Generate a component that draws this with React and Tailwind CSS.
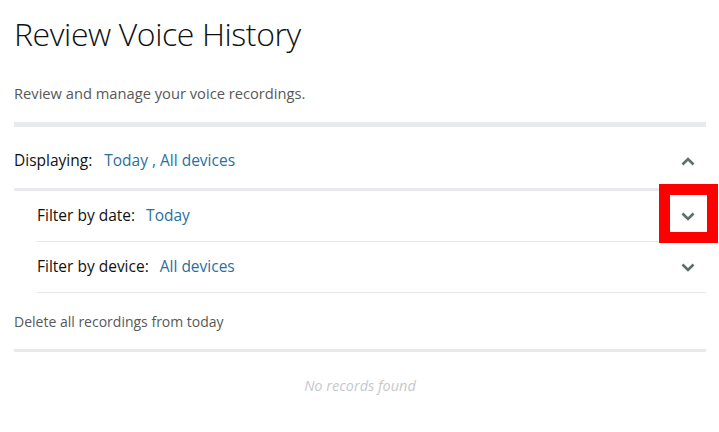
import React from 'react';

const font = { fontFamily: '"Open Sans", "Liberation Sans", sans-serif' };

const Chevron = ({ up }) => (
  <svg width="14" height="9" viewBox="0 0 14 9" className="text-[#5f6b6d]">
    <path
      d={up ? 'M1.5 7.5 L7 2 L12.5 7.5' : 'M1.5 1.5 L7 7 L12.5 1.5'}
      fill="none"
      stroke="currentColor"
      strokeWidth="2.6"
    />
  </svg>
);

const FilterRow = ({ label, value, highlighted }) => (
  <div className="relative flex h-[51px] items-center justify-between border-b border-[#e7e7e7] pr-[11px]">
    <div className="flex items-center gap-[11px] text-[15.5px]">
      <span className="text-[#111]">{label}</span>
      <span className="text-[#2a6f9e]">{value}</span>
    </div>
    <Chevron />
    {highlighted && (
      <div className="absolute right-[-12px] top-[-7px] h-[59px] w-[59px] border-[11px] border-[#ff0000]" />
    )}
  </div>
);

export default function App() {
  return (
    <div className="min-h-screen bg-white px-[14px]" style={font}>
      <h1 className="pt-[14px] text-[32px] font-light leading-[40px] tracking-[-0.4px] text-[#0f1111]">
        Review Voice History
      </h1>
      <p className="mt-[29px] text-[14.7px] leading-[20px] text-[#565959]">
        Review and manage your voice recordings.
      </p>

      <div className="mt-[19px] w-[692px]">
        <div className="h-[5px] bg-[#e7e9ec]" />

        {/* summary row */}
        <div className="flex h-[61px] items-center justify-between pr-[11px] pt-[7px]">
          <div className="flex items-center gap-[12px] text-[15.5px]">
            <span className="text-[#111]">Displaying:</span>
            <span className="text-[#2a6f9e]">Today , All devices</span>
          </div>
          <Chevron up />
        </div>
        <div className="h-[3px] bg-[#e7e9ec]" />

        <div className="pl-[23px]">
          <FilterRow label="Filter by date:" value="Today" highlighted />
          <FilterRow label="Filter by device:" value="All devices" />
        </div>

        <div className="flex h-[56px] items-center text-[14px] text-[#565959]">
          Delete all recordings from today
        </div>
        <div className="h-[3px] bg-[#e7e9ec]" />

        <div className="pt-[23px] text-center text-[14.5px] italic text-[#c6c9cc]">
          No records found
        </div>
      </div>
    </div>
  );
}
